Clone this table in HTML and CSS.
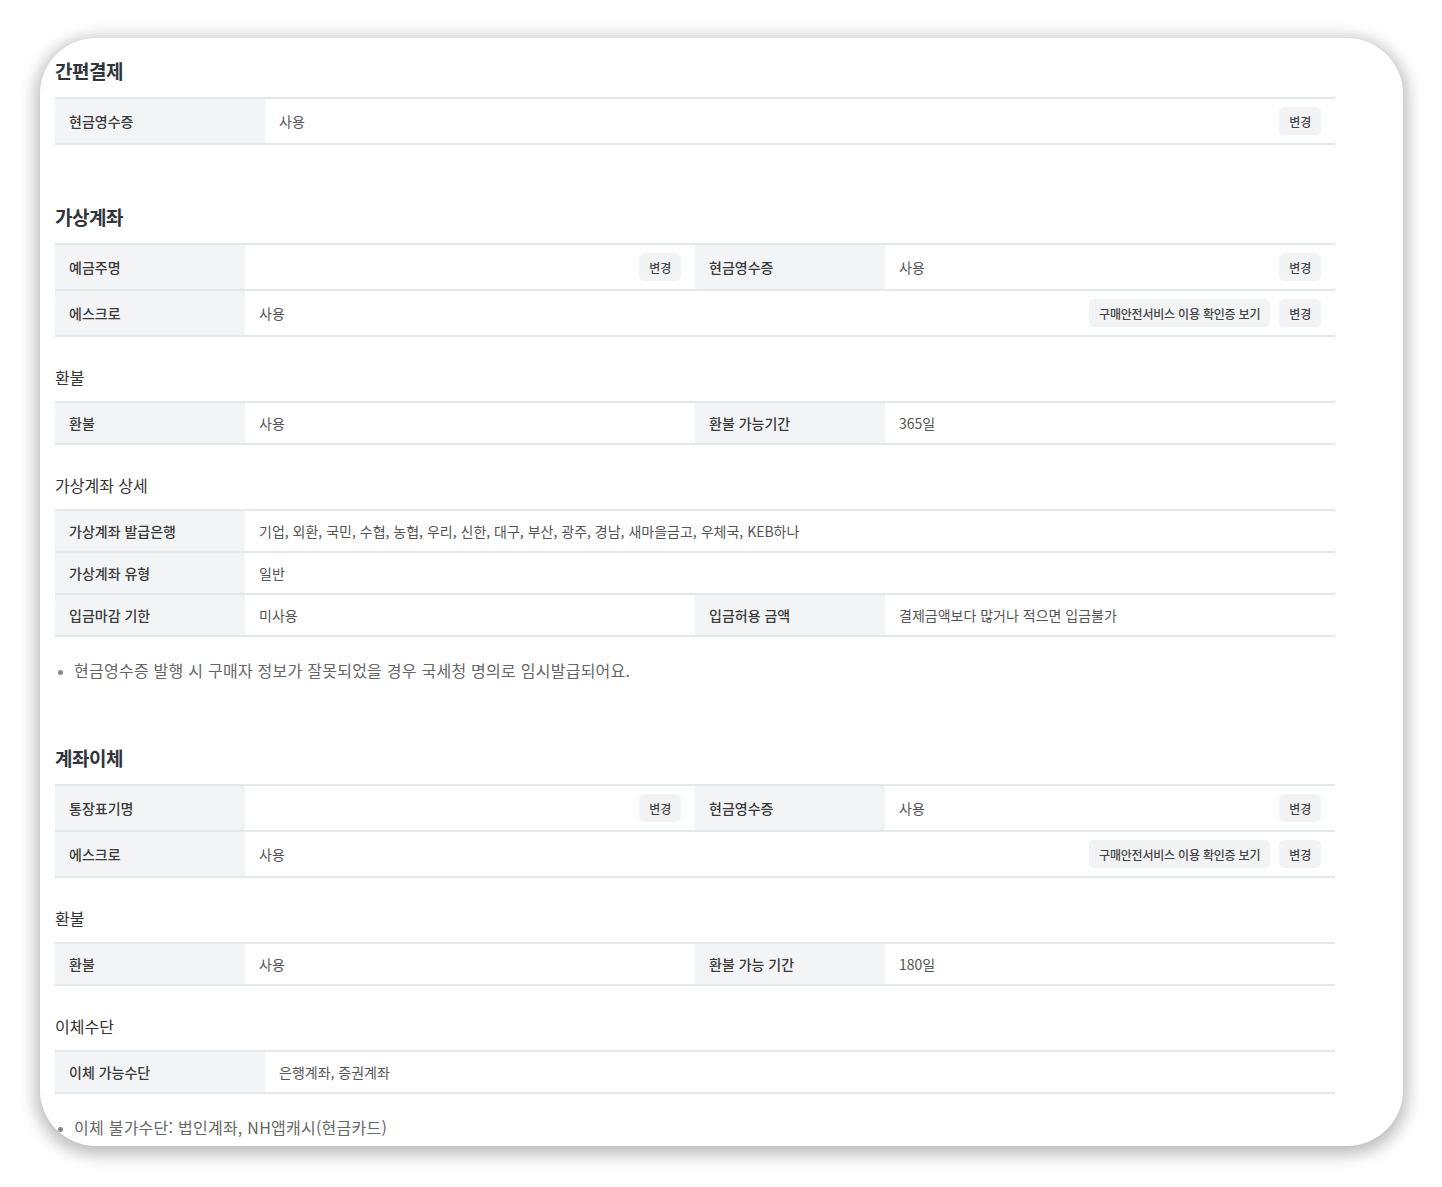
FILE: index.html
```html
<!DOCTYPE html>
<html lang="ko">
<head>
  <meta charset="UTF-8" />
  <meta name="viewport" content="width=device-width, initial-scale=1.0" />
  <title>결제수단 설정</title>
  <link rel="stylesheet" href="styles.css">
</head>
<body>
  <div class="card">

    <section class="group">
      <h2 class="group-title">간편결제</h2>
      <div class="info-table wide">
        <div class="row">
          <div class="th">현금영수증</div>
          <div class="td">사용<span class="btns"><button class="btn">변경</button></span></div>
        </div>
      </div>
    </section>

    <section class="group">
      <h2 class="group-title">가상계좌</h2>
      <div class="info-table">
        <div class="row">
          <div class="th">예금주명</div>
          <div class="td"><span></span><span class="btns"><button class="btn">변경</button></span></div>
          <div class="th">현금영수증</div>
          <div class="td">사용<span class="btns"><button class="btn">변경</button></span></div>
        </div>
        <div class="row">
          <div class="th">에스크로</div>
          <div class="td span">사용<span class="btns"><button class="btn">구매안전서비스 이용 확인증 보기</button><button class="btn">변경</button></span></div>
        </div>
      </div>

      <h3 class="sub-title">환불</h3>
      <div class="info-table">
        <div class="row">
          <div class="th">환불</div>
          <div class="td">사용</div>
          <div class="th">환불 가능기간</div>
          <div class="td">365일</div>
        </div>
      </div>

      <h3 class="sub-title">가상계좌 상세</h3>
      <div class="info-table">
        <div class="row">
          <div class="th">가상계좌 발급은행</div>
          <div class="td span">기업, 외환, 국민, 수협, 농협, 우리, 신한, 대구, 부산, 광주, 경남, 새마을금고, 우체국, KEB하나</div>
        </div>
        <div class="row">
          <div class="th">가상계좌 유형</div>
          <div class="td span">일반</div>
        </div>
        <div class="row">
          <div class="th">입금마감 기한</div>
          <div class="td">미사용</div>
          <div class="th">입금허용 금액</div>
          <div class="td">결제금액보다 많거나 적으면 입금불가</div>
        </div>
      </div>

      <ul class="notes">
        <li>현금영수증 발행 시 구매자 정보가 잘못되었을 경우 국세청 명의로 임시발급되어요.</li>
      </ul>
    </section>

    <section class="group">
      <h2 class="group-title">계좌이체</h2>
      <div class="info-table">
        <div class="row">
          <div class="th">통장표기명</div>
          <div class="td"><span></span><span class="btns"><button class="btn">변경</button></span></div>
          <div class="th">현금영수증</div>
          <div class="td">사용<span class="btns"><button class="btn">변경</button></span></div>
        </div>
        <div class="row">
          <div class="th">에스크로</div>
          <div class="td span">사용<span class="btns"><button class="btn">구매안전서비스 이용 확인증 보기</button><button class="btn">변경</button></span></div>
        </div>
      </div>

      <h3 class="sub-title">환불</h3>
      <div class="info-table">
        <div class="row">
          <div class="th">환불</div>
          <div class="td">사용</div>
          <div class="th">환불 가능 기간</div>
          <div class="td">180일</div>
        </div>
      </div>

      <h3 class="sub-title">이체수단</h3>
      <div class="info-table wide">
        <div class="row">
          <div class="th">이체 가능수단</div>
          <div class="td">은행계좌, 증권계좌</div>
        </div>
      </div>

      <ul class="notes">
        <li>이체 불가수단: 법인계좌, NH앱캐시(현금카드)</li>
      </ul>
    </section>

  </div>
</body>
</html>
```

FILE: styles.css
```css
* { box-sizing: border-box; }
body {
  margin: 0;
  padding-bottom: 40px;
  background: #fff;
  font-family: "Noto Sans CJK KR", "Noto Sans", sans-serif;
  color: #333;
}
.card {
  width: 1363px;
  margin: 38px 0 0 40px;
  padding: 19px 68px 8px 15px;
  background: #fff;
  border-radius: 56px;
  box-shadow: 0 4px 16px 5px rgba(0,0,0,0.26);
}
.group + .group { margin-top: 58px; }
.group:has(.notes) + .group { margin-top: 63px; }
.group-title {
  margin: 0 0 12px;
  font-size: 19px;
  line-height: 28px;
  font-weight: 700;
  letter-spacing: -0.5px;
  color: #2f353b;
}
.sub-title {
  margin: 28px 0 12px;
  font-size: 16px;
  line-height: 24px;
  font-weight: 400;
  color: #333;
}
.info-table {
  border-top: 2px solid #e4e7eb;
  font-size: 14px;
}
.info-table .row {
  display: grid;
  grid-template-columns: 190px 450px 190px 1fr;
  border-bottom: 2px solid #e4e7eb;
}
.info-table.wide .row { grid-template-columns: 210px 1fr; }
.th, .td {
  display: flex;
  align-items: center;
  min-height: 40px;
  padding: 8px 14px;
  line-height: 24px;
}
.th {
  background: #f3f4f6;
  color: #3a3a3a;
  font-weight: 500;
}
.td {
  justify-content: space-between;
  color: #555;
}
.td.span { grid-column: 2 / -1; }
.btns {
  display: flex;
  gap: 9px;
}
.btn {
  height: 28px;
  padding: 0 10px;
  border: none;
  border-radius: 5px;
  background: #f2f3f5;
  color: #444;
  font-family: inherit;
  font-size: 12px;
  font-weight: 500;
  letter-spacing: -0.2px;
  cursor: pointer;
}
.notes {
  margin: 22px 0 0;
  padding: 0 0 0 19px;
  font-size: 16px;
  line-height: 22px;
  letter-spacing: 0.25px;
  color: #666;
}
.notes li::marker { color: #888; font-size: 12px; }
```
